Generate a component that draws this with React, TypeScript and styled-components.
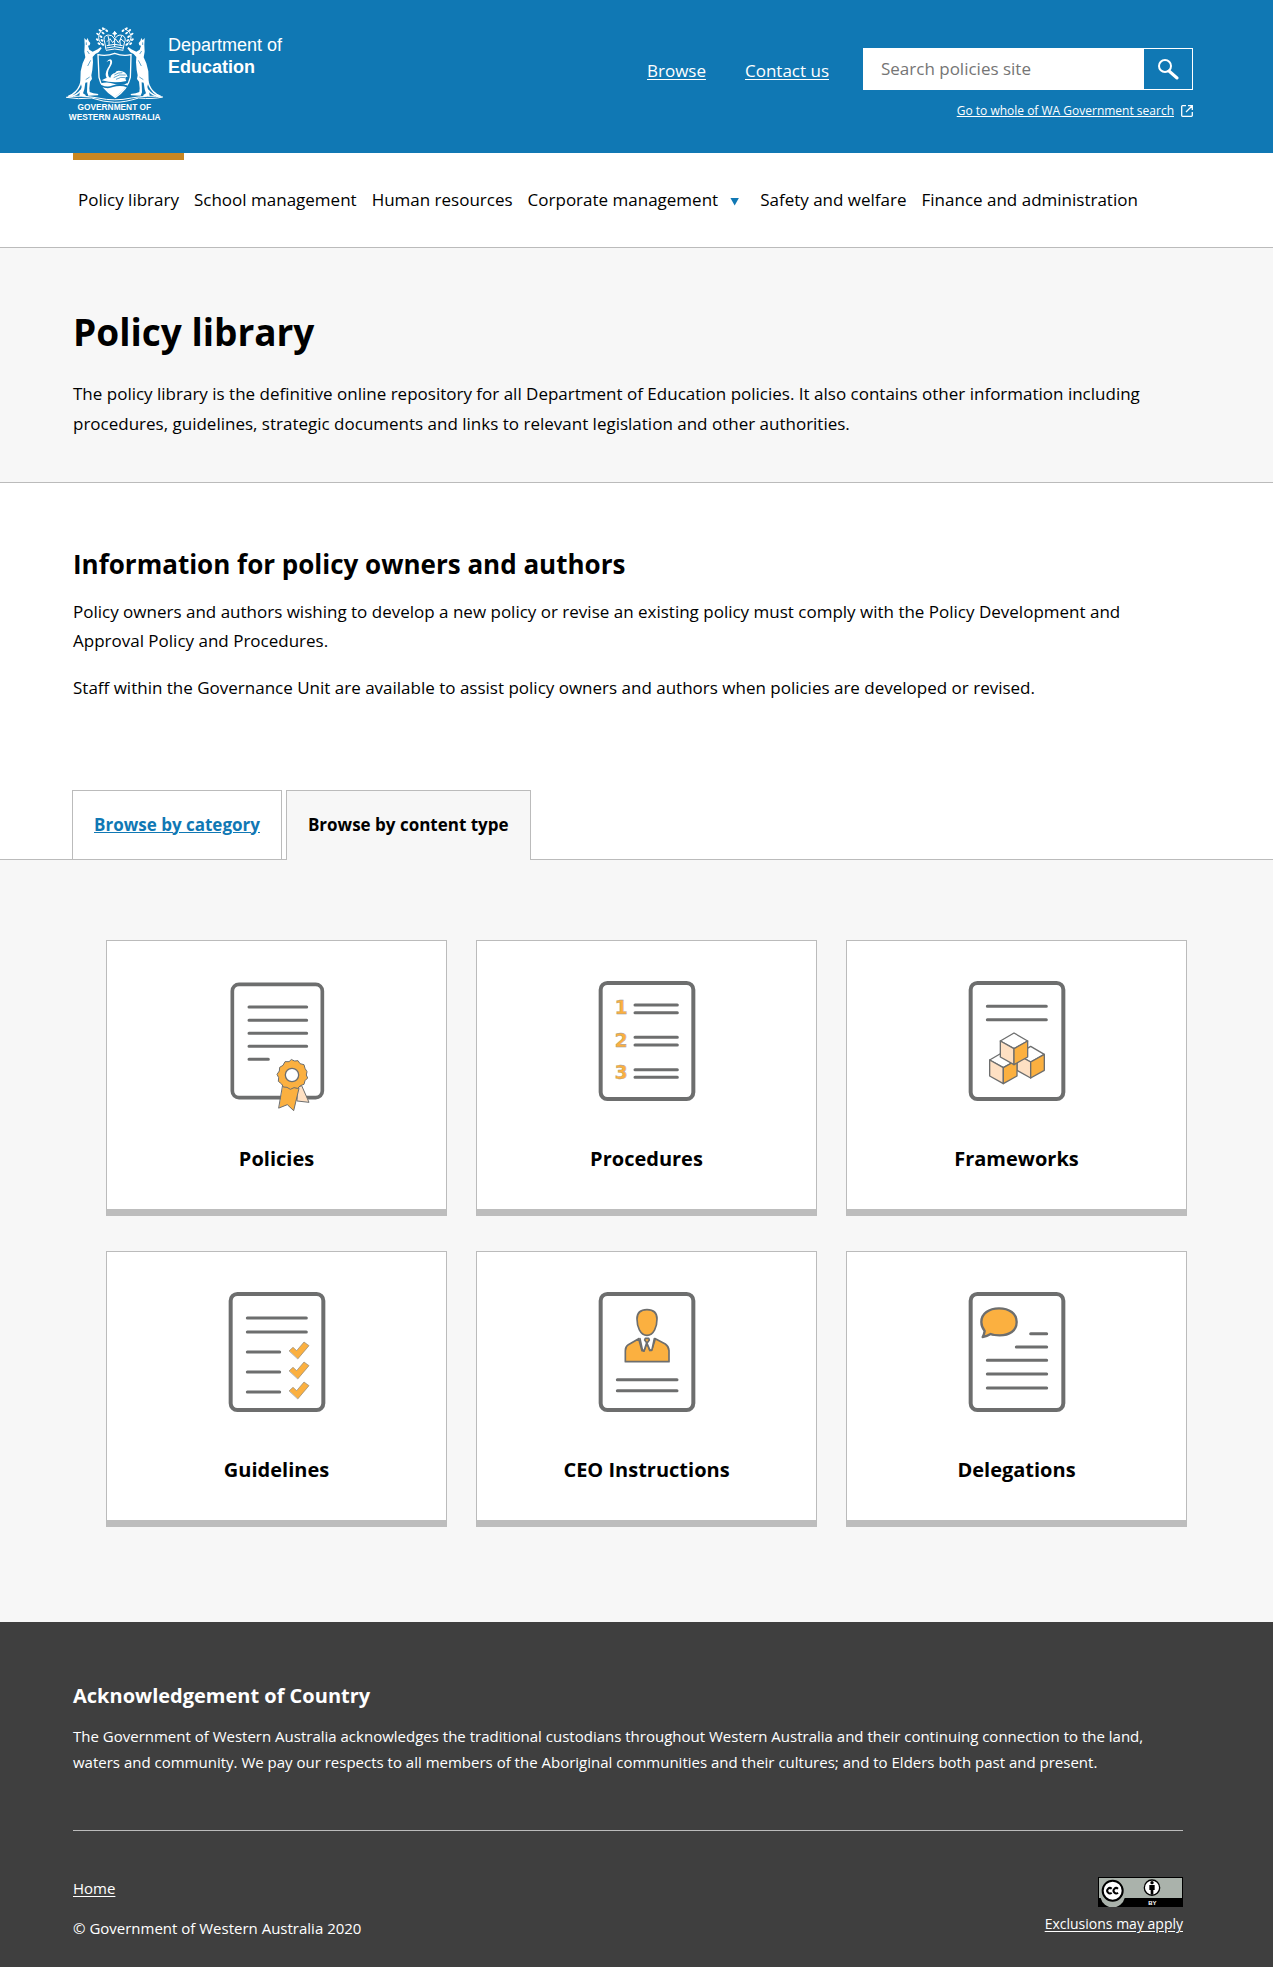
import React from "react";
import styled, { createGlobalStyle } from "styled-components";

const sans = `"Open Sans", "Noto Sans", sans-serif`;
const arial = `"Liberation Sans", Arial, sans-serif`;
const grey = "#6d6e6e";
const amber = "#fbb040";
const peach = "#fee0c3";

const GlobalStyle = createGlobalStyle`
  *, *::before, *::after { box-sizing: border-box; }
  body { margin: 0; background: #fff; color: #000; font: 17px/29px ${sans}; }
  h1, h2, p, ul { margin: 0; padding: 0; }
  a { color: inherit; }
`;

const Wrap = styled.div`
  padding: 0 90px 0 73px;
`;

const Header = styled.header`
  display: flex;
  justify-content: space-between;
  align-items: flex-start;
  min-height: 153px;
  padding: 23px 80px 0 65px;
  background: #1078b4;
  color: #fff;
`;

const Brand = styled.a`
  display: flex;
  gap: 3px;
  text-decoration: none;
`;

const Department = styled.span`
  padding-top: 11px;
  font: 18px/22px ${arial};
`;

const DepartmentName = styled.strong`
  display: block;
`;

const HeaderTools = styled.div`
  display: flex;
  align-items: flex-start;
  padding-top: 25px;
`;

const HeaderLinks = styled.nav`
  display: flex;
  gap: 39px;
  padding: 8px 34px 0 0;
`;

const Plain = styled.a`
  text-underline-offset: 2px;
`;

const SearchArea = styled.div`
  display: flex;
  flex-direction: column;
  align-items: flex-end;
  gap: 10px;
  width: 330px;
`;

const SearchForm = styled.form`
  display: flex;
  width: 100%;
  height: 42px;
  border: 1px solid #fff;
`;

const SearchInput = styled.input`
  flex: 1;
  min-width: 0;
  padding: 0 17px 2px;
  border: 0;
  background: #fff;
  font: 17px ${sans};
  &::placeholder { color: #757575; opacity: 1; }
`;

const SearchButton = styled.button`
  display: grid;
  place-items: center;
  width: 48px;
  padding: 0;
  border: 0;
  background: #1078b4;
  color: #fff;
`;

const SmallLink = styled.a`
  display: flex;
  align-items: center;
  gap: 7px;
  font-size: 12px;
  line-height: 22px;
`;

const MainNav = styled.nav`
  border-bottom: 1px solid #bbb;
`;

const NavList = styled.ul`
  display: flex;
  gap: 5px;
  list-style: none;
`;

const NavItem = styled.li<{ $active?: boolean }>`
  display: flex;
  align-items: center;
  gap: 12px;
  height: 94px;
  padding: 0 5px 8px;
  border-top: 7px solid ${(p) => (p.$active ? "#c98722" : "transparent")};
`;

const NavLink = styled.a`
  text-decoration: none;
  white-space: nowrap;
`;

const Caret = styled.button`
  width: 9px;
  height: 8px;
  margin: 4px 6px 0 0;
  padding: 0;
  border: 0;
  background: #1078b4;
  clip-path: polygon(0 0, 100% 0, 50% 100%);
`;

const Hero = styled.section`
  padding: 54px 0 43px;
  background: #f7f7f7;
  border-bottom: 1px solid #bbb;
`;

const Title = styled.h1`
  margin-bottom: 17px;
  font-size: 37px;
  line-height: 60px;
`;

const Lead = styled.p`
  line-height: 30px;
`;

const Info = styled.section`
  padding: 61px 0 88px;
`;

const InfoTitle = styled.h2`
  margin-bottom: 13px;
  font-size: 26px;
  line-height: 40px;
`;

const Para = styled.p`
  & + & { margin-top: 18px; }
`;

const TabBar = styled.div`
  display: flex;
  gap: 4px;
  padding-left: 72px;
  border-bottom: 1px solid #bbb;
`;

const Tab = styled.button<{ $active?: boolean }>`
  height: ${(p) => (p.$active ? "70px" : "69px")};
  margin-bottom: ${(p) => (p.$active ? "-1px" : "0")};
  padding: 0 21px 2px;
  border: 1px solid #bbb;
  border-bottom: 0;
  background: ${(p) => (p.$active ? "#f7f7f7" : "#fff")};
  color: ${(p) => (p.$active ? "#000" : "#1078b4")};
  font: bold 17px ${sans};
  text-decoration: ${(p) => (p.$active ? "none" : "underline")};
`;

const Panel = styled.section`
  padding: 80px 86px 95px 106px;
  background: #f7f7f7;
`;

const Cards = styled.div`
  display: grid;
  grid-template-columns: repeat(3, 1fr);
  gap: 35px 29px;
`;

const Card = styled.a`
  display: flex;
  flex-direction: column;
  align-items: center;
  gap: 32px;
  height: 276px;
  padding-top: 34px;
  background: #fff;
  border: 1px solid #bbb;
  border-bottom: 7px solid #bdbdbd;
  font-size: 20px;
  font-weight: bold;
  line-height: 40px;
  text-decoration: none;
`;

const Footer = styled.footer`
  padding: 58px 0 28px;
  background: #3f3f3f;
  color: #fff;
  font-size: 15px;
  line-height: 26px;
`;

const FooterTitle = styled.h2`
  margin-bottom: 11px;
  font-size: 20px;
  line-height: 32px;
`;

const FooterRow = styled.div`
  display: flex;
  justify-content: space-between;
  margin-top: 55px;
  padding-top: 44px;
  border-top: 1px solid #bbb;
`;

const FooterColumn = styled.div<{ $end?: boolean }>`
  display: flex;
  flex-direction: column;
  align-items: ${(p) => (p.$end ? "flex-end" : "flex-start")};
  gap: ${(p) => (p.$end ? "4px" : "14px")};
  padding-top: ${(p) => (p.$end ? "2px" : "0")};
  font-size: ${(p) => (p.$end ? "14px" : "15px")};
`;

function Kangaroo() {
  return (
    <g>
      <path d="M103 84 L109 91 L113 84 L116 93 L121 99 L119 106 L114 107 L118 119 L128 125 L143 118 L152 111 L155 115 L146 127 L136 132 L128 141 L129 157 L127 180 L124 196 L126 207 L120 215 L118 235 L119 246 L130 250 L145 252 L144 256 L115 257 L111 247 L112 217 L106 218 L103 238 L99 250 L107 255 L107 260 L88 259 L89 249 L95 231 L91 214 L92 184 L98 160 L106 142 L103 125 L104 105 Z" fill="#fff" />
      <path d="M94 213 Q87 241 67 253 L55 259 Q79 260 93 240" fill="none" stroke="#fff" strokeWidth="4" />
      <path d="M109 97v8M112 123l6 9M122 151l-9 17M119 201l-12 8" stroke="#1078b4" strokeWidth="2" />
    </g>
  );
}

function Crest() {
  return (
    <svg width="100" height="100" viewBox="45 39 300 300" role="img" aria-label="Government of Western Australia">
      <Kangaroo />
      <g transform="translate(387 0) scale(-1 1)"><Kangaroo /></g>
      <path d="M144 134 Q169 140 194 130 Q219 140 243 134 Q242 180 241 202 Q233 238 196 262 Q153 236 147 202 Z" fill="#1078b4" stroke="#fff" strokeWidth="4" />
      <path d="M153 220 Q173 214 194 222 Q216 229 234 218 Q226 239 195 261 Q166 243 153 220Z" fill="#fff" />
      <path d="M153 227 Q172 236 188 229 Q209 222 232 229" fill="none" stroke="#1078b4" strokeWidth="5" />
      <path d="M169 157 Q178 144 184 149 Q190 156 181 170 Q167 191 180 205 Q177 211 171 206 Q162 194 173 175 Q183 160 180 153 Q176 151 169 157Z" fill="#fff" />
      <path d="M155 211 Q172 200 181 203 Q184 191 195 189 Q200 180 211 183 Q227 184 233 200 Q222 199 229 213 Q192 222 155 211Z" fill="#fff" />
      <path d="M191 203 Q207 191 227 195M198 208 Q213 199 226 203M193 195 Q204 187 217 188" stroke="#1078b4" strokeWidth="2" fill="none" />
      <g fill="none" stroke="#fff" strokeWidth="3">
        <path d="M168 119 L164 96 Q157 78 174 75 Q187 73 194 87 Q203 72 216 76 Q231 81 223 99 L219 119" />
        <path d="M170 107 Q194 99 218 107M168 121 Q194 113 220 121M169 114 Q194 106 219 114M194 86v25M174 78 Q179 91 177 107M215 78 Q206 91 211 107" />
        <path d="M194 63v18M187 71h14M171 95l9-9 8 12 9-11 8 11 8-11 9 8" />
        <path d="M166 56 Q147 61 146 82 Q146 97 160 105M224 56 Q244 66 243 84 Q241 99 227 105" />
      </g>
      <g fill="#fff">
        {[[160, 56], [170, 62], [150, 61], [159, 69], [143, 72], [153, 80], [142, 89], [156, 91], [147, 101], [158, 103]].map(([x, y]) => (
          <g key={`${x}-${y}`}>
            <ellipse cx={x} cy={y} rx="5" ry="3" transform={`rotate(35 ${x} ${y})`} />
            <ellipse cx={389 - x} cy={y} rx="5" ry="3" transform={`rotate(-35 ${389 - x} ${y})`} />
          </g>
        ))}
        <circle cx="194" cy="70" r="5" />
      </g>
      <path d="M49 262 Q90 254 144 264 Q194 275 244 264 Q295 255 338 261 Q310 268 266 264 Q225 277 194 277 Q160 276 125 264 Q83 269 49 262Z" fill="#1078b4" stroke="#fff" strokeWidth="3" />
      <g fill="#fff" fontFamily="Liberation Sans, Arial, sans-serif" fontWeight="bold" fontSize="25" textAnchor="middle">
        <text x="193" y="299">GOVERNMENT OF</text>
        <text x="194" y="330">WESTERN AUSTRALIA</text>
      </g>
    </svg>
  );
}

const IconFrame = styled.svg`
  flex: none;
  overflow: visible;
`;

function SheetIcon({ children }: { children: React.ReactNode }) {
  return (
    <IconFrame width="130" height="132" viewBox="0 0 390 396" aria-hidden="true" stroke={grey} strokeWidth="9" strokeLinecap="round" strokeLinejoin="round" fill="none">
      {children}
    </IconFrame>
  );
}

const Sheet = () => <rect x="56" y="24" width="278" height="348" rx="20" strokeWidth="12" />;

function PoliciesIcon() {
  return (
    <SheetIcon>
      <rect x="61" y="28" width="270" height="340" rx="20" strokeWidth="11" />
      <path d="M111 96h173M111 136h173M111 175h173M111 214h173M111 253h58" />
      <g strokeWidth="3">
        <path d="M256 338 L269 332 L291 382 L256 378Z" fill={peach} />
        <path d="M213 330 L261 340 L245 407 L226 389 L201 399Z" fill={amber} />
        <path d="M239 254 L248 258 L258 257 L264 266 L276 269 L279 280 L285 290 L283 300 L287 309 L279 317 L276 328 L265 332 L257 340 L246 338 L235 343 L225 337 L214 336 L209 327 L199 319 L200 308 L195 298 L202 288 L203 277 L213 271 L219 260 L230 260Z" fill={amber} />
        <circle cx="240" cy="300" r="20" fill="#fff" strokeWidth="4" />
      </g>
    </SheetIcon>
  );
}

function ProceduresIcon() {
  return (
    <SheetIcon>
      <Sheet />
      {[0, 1, 2].map((i) => (
        <g key={i}>
          <path d={`M159 ${90 + i * 97}h127M159 ${113 + i * 97}h127`} />
          <text x="117" y={118 + i * 97} fill={amber} stroke="#999" strokeWidth="1" fontFamily="DejaVu Sans, sans-serif" fontWeight="bold" fontSize="57" textAnchor="middle">{i + 1}</text>
        </g>
      ))}
    </SheetIcon>
  );
}

const Cube = ({ x, y }: { x: number; y: number }) => (
  <g transform={`translate(${x} ${y})`} strokeWidth="4">
    <path d="M0 0 L41 24 L0 47 L-41 24Z" fill="#fff" />
    <path d="M-41 24 L0 47 V95 L-41 72Z" fill={peach} />
    <path d="M41 24 L0 47 V95 L41 72Z" fill={amber} />
  </g>
);

function FrameworksIcon() {
  return (
    <SheetIcon>
      <Sheet />
      <path d="M106 94h177M106 134h177" />
      <Cube x={236} y={214} />
      <Cube x={154} y={231} />
      <Cube x={186} y={174} />
    </SheetIcon>
  );
}

function GuidelinesIcon() {
  return (
    <SheetIcon>
      <Sheet />
      <path d="M106 96h177M106 138h177M106 198h97M106 258h97M106 318h97" />
      {[0, 60, 120].map((y) => (
        <path key={y} transform={`translate(-2 ${y})`} d="M234 194 L245 184 L256 194 L278 168 L293 179 L260 218Z" fill={amber} stroke="#8d8577" strokeWidth="2" />
      ))}
    </SheetIcon>
  );
}

function InstructionsIcon() {
  return (
    <SheetIcon>
      <Sheet />
      <path d="M106 281h179M106 314h179" />
      <g strokeWidth="5" fill={amber}>
        <path d="M195 71 C214 71 225 80 225 99 C225 121 216 148 195 148 C174 148 165 121 165 99 C165 80 176 71 195 71Z" />
        <path d="M170 158 L139 176 Q130 182 130 194 V227 H261 V194 Q260 181 250 174 L220 158 L209 193 L203 193 L195 170 L186 195 L180 194Z" />
        <path d="M174 158 L181 191 L186 195 L194 170 L204 193 L210 191 L217 158" fill="#fff" />
        <path d="M190 157 h10 l2 5 -5 7 h-4 l-5 -7Z" />
      </g>
    </SheetIcon>
  );
}

function DelegationsIcon() {
  return (
    <SheetIcon>
      <Sheet />
      <path d="M236 143h48M193 183h91M106 223h178M106 264h178M106 306h178" />
      <path d="M141 67 C172 67 194 83 194 108 C194 135 172 148 143 148 Q125 148 116 144 Q105 151 92 153 Q97 144 98 135 Q88 122 88 108 C88 83 111 67 141 67Z" fill={amber} strokeWidth="7" />
    </SheetIcon>
  );
}

const contentTypes = [
  { name: "Policies", Icon: PoliciesIcon },
  { name: "Procedures", Icon: ProceduresIcon },
  { name: "Frameworks", Icon: FrameworksIcon },
  { name: "Guidelines", Icon: GuidelinesIcon },
  { name: "CEO Instructions", Icon: InstructionsIcon },
  { name: "Delegations", Icon: DelegationsIcon },
];

const sections = [
  { name: "Policy library", active: true },
  { name: "School management" },
  { name: "Human resources" },
  { name: "Corporate management", menu: true },
  { name: "Safety and welfare" },
  { name: "Finance and administration" },
];

function LicenceBadge() {
  return (
    <svg width="85" height="30" viewBox="0 0 255 90" role="img" aria-label="Creative Commons Attribution licence">
      <rect width="255" height="90" fill="#000" />
      <rect x="3" y="3" width="249" height="60" fill="#aab2ab" />
      <path d="M8 63 A37 37 0 0 0 80 63 Z" fill="#aab2ab" />
      <circle cx="44" cy="41" r="30" fill="#fff" stroke="#000" strokeWidth="6" />
      <path d="M41 35 A8 8 0 1 0 41 47M60 35 A8 8 0 1 0 60 47" fill="none" stroke="#000" strokeWidth="6" />
      <circle cx="162" cy="32" r="23" fill="#fff" stroke="#000" strokeWidth="4" />
      <circle cx="162" cy="17" r="5" />
      <path d="M154 24h16v15h-4v14h-8v-14h-4z" />
      <text x="163" y="84" fill="#fff" fontFamily="Liberation Sans, Arial, sans-serif" fontWeight="bold" fontSize="18" textAnchor="middle">BY</text>
    </svg>
  );
}

export default function App() {
  return (
    <>
      <GlobalStyle />
      <Header>
        <Brand href="#">
          <Crest />
          <Department>
            Department of <DepartmentName>Education</DepartmentName>
          </Department>
        </Brand>
        <HeaderTools>
          <HeaderLinks aria-label="Site">
            <Plain href="#">Browse</Plain>
            <Plain href="#">Contact us</Plain>
          </HeaderLinks>
          <SearchArea>
            <SearchForm role="search" onSubmit={(e) => e.preventDefault()}>
              <SearchInput type="search" aria-label="Search policies site" placeholder="Search policies site" />
              <SearchButton type="submit" aria-label="Search">
                <svg width="22" height="22" viewBox="0 0 22 22" fill="none" stroke="currentColor">
                  <circle cx="8" cy="8" r="6" strokeWidth="2" />
                  <path d="M12 13l8 7" strokeWidth="3" strokeLinecap="round" />
                </svg>
              </SearchButton>
            </SearchForm>
            <SmallLink href="#">
              Go to whole of WA Government search
              <svg width="12" height="12" viewBox="0 0 12 12" fill="none" stroke="currentColor" strokeWidth="1.3" aria-hidden="true">
                <path d="M5 .7H1.5a.8.8 0 0 0-.8.8v9a.8.8 0 0 0 .8.8h9a.8.8 0 0 0 .8-.8V7M7 .7h4.3V5M11 1L5 7" />
              </svg>
            </SmallLink>
          </SearchArea>
        </HeaderTools>
      </Header>

      <MainNav aria-label="Main">
        <Wrap>
          <NavList>
            {sections.map((s) => (
              <NavItem key={s.name} $active={s.active}>
                <NavLink href="#">{s.name}</NavLink>
                {s.menu && <Caret type="button" aria-label="Show Corporate management menu" />}
              </NavItem>
            ))}
          </NavList>
        </Wrap>
      </MainNav>

      <main>
        <Hero>
          <Wrap>
            <Title>Policy library</Title>
            <Lead>
              The policy library is the definitive online repository for all Department of Education policies. It also contains other
              information including procedures, guidelines, strategic documents and links to relevant legislation and other
              authorities.
            </Lead>
          </Wrap>
        </Hero>
        <Info>
          <Wrap>
            <InfoTitle>Information for policy owners and authors</InfoTitle>
            <Para>
              Policy owners and authors wishing to develop a new policy or revise an existing policy must comply with the Policy
              Development and Approval Policy and Procedures.
            </Para>
            <Para>
              Staff within the Governance Unit are available to assist policy owners and authors when policies are developed or revised.
            </Para>
          </Wrap>
        </Info>
        <TabBar role="tablist">
          <Tab type="button" role="tab" aria-selected="false">Browse by category</Tab>
          <Tab type="button" role="tab" aria-selected="true" $active>Browse by content type</Tab>
        </TabBar>
        <Panel role="tabpanel">
          <Cards>
            {contentTypes.map(({ name, Icon }) => (
              <Card key={name} href="#">
                <Icon />
                {name}
              </Card>
            ))}
          </Cards>
        </Panel>
      </main>

      <Footer>
        <Wrap>
          <FooterTitle>Acknowledgement of Country</FooterTitle>
          <p>
            The Government of Western Australia acknowledges the traditional custodians throughout Western Australia and their
            continuing connection to the land, waters and community. We pay our respects to all members of the Aboriginal
            communities and their cultures; and to Elders both past and present.
          </p>
          <FooterRow>
            <FooterColumn>
              <Plain href="#">Home</Plain>
              <span>© Government of Western Australia 2020</span>
            </FooterColumn>
            <FooterColumn $end>
              <LicenceBadge />
              <Plain href="#">Exclusions may apply</Plain>
            </FooterColumn>
          </FooterRow>
        </Wrap>
      </Footer>
    </>
  );
}
